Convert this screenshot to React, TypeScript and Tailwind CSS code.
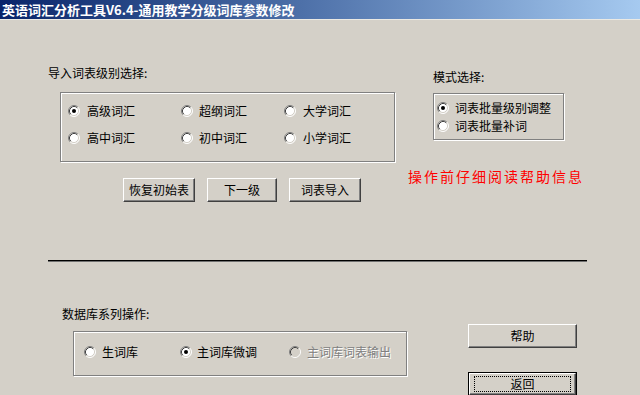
import React from "react";

const Radio = ({ checked = false, disabled = false }: { checked?: boolean; disabled?: boolean }) => (
  <svg width="12" height="12" viewBox="0 0 12 12" className="shrink-0">
    <circle cx="6" cy="6" r="5" fill={disabled ? "#d4d0c8" : "#ffffff"} />
    <path d="M2.11 9.89A5.5 5.5 0 0 1 9.89 2.11" stroke="#808080" fill="none" />
    <path d="M9.89 2.11A5.5 5.5 0 0 1 2.11 9.89" stroke="#ffffff" fill="none" />
    <path d="M2.82 9.18A4.5 4.5 0 0 1 9.18 2.82" stroke="#404040" fill="none" />
    <path d="M9.18 2.82A4.5 4.5 0 0 1 2.82 9.18" stroke="#d4d0c8" fill="none" />
    {checked && <circle cx="6" cy="6" r="2" fill={disabled ? "#808080" : "#000000"} />}
  </svg>
);

const RadioItem = ({
  label,
  checked = false,
  disabled = false,
  gap = "gap-[7px]",
}: {
  label: string;
  checked?: boolean;
  disabled?: boolean;
  gap?: string;
}) => (
  <div className={`flex h-[16px] items-center ${gap}`}>
    <Radio checked={checked} disabled={disabled} />
    <span
      className={
        disabled
          ? "whitespace-nowrap text-[#808080] [text-shadow:1px_1px_0_#ffffff]"
          : "whitespace-nowrap text-black"
      }
    >
      {label}
    </span>
  </div>
);

const Button = ({ label, w, isDefault = false }: { label: string; w: string; isDefault?: boolean }) =>
  isDefault ? (
    <div className={`${w} h-[24px] border border-black bg-[#d4d0c8]`}>
      <div className="flex h-full w-full items-center justify-center border border-t-white border-l-white border-r-[#404040] border-b-[#404040] shadow-[inset_-1px_-1px_0_#808080]">
        <div className="flex h-[16px] w-[calc(100%-8px)] items-center justify-center border border-dotted border-black text-black">
          {label}
        </div>
      </div>
    </div>
  ) : (
    <div
      className={`${w} flex h-[24px] items-center justify-center border border-t-white border-l-white border-r-[#404040] border-b-[#404040] bg-[#d4d0c8] text-black shadow-[inset_-1px_-1px_0_#808080]`}
    >
      {label}
    </div>
  );

const GroupBox = ({ className, children }: { className: string; children?: React.ReactNode }) => (
  <div
    className={`border border-[#808080] shadow-[inset_1px_1px_0_#ffffff,1px_1px_0_#ffffff] ${className}`}
  >
    {children}
  </div>
);

export default function App() {
  return (
    <div className="h-[395px] w-[640px] overflow-hidden bg-[#d4d0c8] font-[family-name:Noto_Sans_CJK_SC,sans-serif] text-[12px] leading-[16px]">
      {/* Title bar */}
      <div className="flex h-[19px] items-center bg-gradient-to-r from-[#0a246a] to-[#a6caf0] pl-[2px]">
        <span className="whitespace-nowrap text-[13px] font-bold leading-[16px] text-white">
          英语词汇分析工具V6.4-通用教学分级词库参数修改
        </span>
      </div>
      <div className="h-[1px] bg-[#ebe9e3]" />

      {/* Top section */}
      <div className="flex items-start">
        <div className="flex flex-col pl-[48px] pt-[45px]">
          <div className="h-[16px]">导入词表级别选择:</div>
          <GroupBox className="ml-[12px] mt-[11px] h-[70px] w-[335px]">
            <div className="grid grid-cols-[113px_103px_auto] gap-y-[11px] pl-[7px] pt-[10px]">
              <RadioItem label="高级词汇" checked />
              <RadioItem label="超纲词汇" gap="gap-[6px]" />
              <RadioItem label="大学词汇" />
              <RadioItem label="高中词汇" />
              <RadioItem label="初中词汇" gap="gap-[6px]" />
              <RadioItem label="小学词汇" />
            </div>
          </GroupBox>
          <div className="ml-[75px] mt-[16px] flex gap-[12px]">
            <Button label="恢复初始表" w="w-[72px]" />
            <Button label="下一级" w="w-[70px]" />
            <Button label="词表导入" w="w-[72px]" />
          </div>
        </div>

        <div className="ml-[38px] flex flex-col pt-[49px]">
          <div className="h-[16px]">模式选择:</div>
          <GroupBox className="mt-[8px] h-[47px] w-[131px]">
            <div className="flex flex-col gap-[2px] pl-[3px] pt-[6px]">
              <RadioItem label="词表批量级别调整" checked gap="gap-[6px]" />
              <RadioItem label="词表批量补词" gap="gap-[6px]" />
            </div>
          </GroupBox>
          <div className="ml-[-25px] mt-[26px] whitespace-nowrap text-[14px] leading-[20px] tracking-[2px] text-[#ff0000]">
            操作前仔细阅读帮助信息
          </div>
        </div>
      </div>

      {/* Separator */}
      <div className="ml-[48px] mt-[58px] h-[2px] w-[539px] border-t border-b border-t-black border-b-[#707070]" />

      {/* Bottom section */}
      <div className="flex items-start">
        <div className="flex flex-col pl-[62px] pt-[44px]">
          <div className="h-[16px]">数据库系列操作:</div>
          <GroupBox className="ml-[11px] mt-[9px] h-[45px] w-[334px]">
            <div className="grid grid-cols-[96px_109px_auto] pl-[10px] pt-[12px]">
              <RadioItem label="生词库" gap="gap-[6px]" />
              <RadioItem label="主词库微调" checked gap="gap-[5px]" />
              <RadioItem label="主词库词表输出" disabled gap="gap-[6px]" />
            </div>
          </GroupBox>
        </div>
        <div className="ml-[61px] flex flex-col gap-[24px] pt-[62px]">
          <Button label="帮助" w="w-[109px]" />
          <Button label="返回" w="w-[109px]" isDefault />
        </div>
      </div>
    </div>
  );
}
